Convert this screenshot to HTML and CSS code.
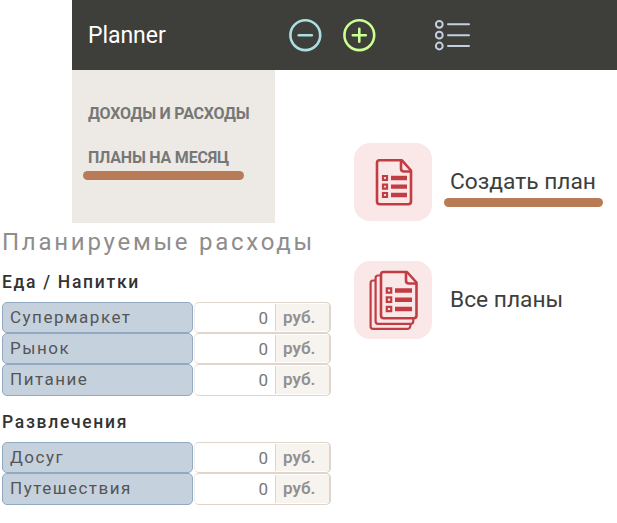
FILE: index.html
```html
<!DOCTYPE html>
<html lang="ru">
<head>
<meta charset="utf-8">
<title>Planner</title>
<link rel="stylesheet" href="styles.css">
</head>
<body>
<header class="topbar">
  <span class="brand">Planner</span>
  <svg class="icon-circle minus" viewBox="0 0 34 34"><circle cx="17.3" cy="17.2" r="14.9"/><path d="M10.8 17.2h13"/></svg>
  <svg class="icon-circle plus" viewBox="0 0 34 34"><circle cx="17.3" cy="17.2" r="14.9"/><path d="M10.8 17.2h13M17.3 10.7v13"/></svg>
  <svg class="icon-list" viewBox="0 0 36 34"><circle cx="4.3" cy="6.3" r="3.4"/><circle cx="4.3" cy="17.2" r="3.4"/><circle cx="4.3" cy="28" r="3.4"/><path d="M13 6.3h21M13 17.2h21M13 28h21"/></svg>
</header>
<div class="content">
  <div class="left">
    <nav class="sidebar">
      <a class="nav-item">ДОХОДЫ И РАСХОДЫ</a>
      <a class="nav-item">ПЛАНЫ НА МЕСЯЦ</a>
      <span class="mark"></span>
    </nav>
    <main class="budget">
      <h1>Планируемые расходы</h1>
      <h2>Еда / Напитки</h2>
      <div class="rows">
        <div class="row"><span class="name">Супермаркет</span><span class="field"><span class="value">0</span><span class="unit">руб.</span></span></div>
        <div class="row"><span class="name">Рынок</span><span class="field"><span class="value">0</span><span class="unit">руб.</span></span></div>
        <div class="row"><span class="name">Питание</span><span class="field"><span class="value">0</span><span class="unit">руб.</span></span></div>
      </div>
      <h2 class="second">Развлечения</h2>
      <div class="rows">
        <div class="row"><span class="name">Досуг</span><span class="field"><span class="value">0</span><span class="unit">руб.</span></span></div>
        <div class="row"><span class="name">Путешествия</span><span class="field"><span class="value">0</span><span class="unit">руб.</span></span></div>
      </div>
    </main>
  </div>
  <section class="actions">
    <a class="action">
      <span class="tile">
        <svg viewBox="0 0 78 78">
          <path class="sheet" d="M25.5 17.3H48L57 27.5V58.5Q57 61.2 54.3 61.2H25.7Q23 61.2 23 58.5V20Q23 17.3 25.5 17.3Z"/>
          <path class="fold" d="M47 18V25.5Q47 28.5 50 28.5H57"/>
          <path class="boxes" d="M29 33h4v4h-4zM29 41.6h4v4h-4zM29 50h4v4h-4z"/>
          <path class="lines" d="M37 35h16M37 43.6h16M37 52h16"/>
        </svg>
      </span>
      <span class="action-text">Создать план<span class="mark"></span></span>
    </a>
    <a class="action">
      <span class="tile">
        <svg viewBox="0 0 78 78">
          <path class="back" d="M22 19.5H19Q16.6 19.5 16.6 22V65.5Q16.6 67.8 19 67.8H54Q56 67.8 56.3 65L56.8 63"/>
          <path class="back" d="M27 14.5H24Q21.6 14.5 21.6 17V60Q21.6 62.8 24 62.8H57Q59.2 62.8 59.3 60V58"/>
          <path class="sheet" d="M29.5 11H53L62.5 21.5V54.5Q62.5 57.2 59.8 57.2H29.7Q27 57.2 27 54.5V13.5Q27 11 29.5 11Z"/>
          <path class="fold" d="M52 12V19.5Q52 22.5 55 22.5H62.5"/>
          <path class="boxes" d="M32.8 27.3h4.4v4.4h-4.4zM32.8 36.4h4.4v4.4h-4.4zM32.8 45.8h4.4v4.4h-4.4z"/>
          <path class="lines" d="M41 29.5h17M41 38.7h17M41 48h17"/>
        </svg>
      </span>
      <span class="action-text">Все планы</span>
    </a>
  </section>
</div>
</body>
</html>
```
FILE: styles.css
```css
* { box-sizing: border-box; }
body {
  margin: 0;
  width: 617px;
  height: 523px;
  overflow: hidden;
  background: #fff;
  font-family: Roboto, "Liberation Sans", sans-serif;
}
.topbar {
  display: flex;
  align-items: center;
  height: 70px;
  margin-left: 72px;
  padding-left: 16px;
  background: #3e3e3a;
  color: #fff;
}
.brand { width: 200px; padding-top: 2px; font-size: 23px; line-height: 28px; letter-spacing: -0.05px; }
.topbar svg { fill: none; stroke-linecap: round; flex: none; }
.icon-circle { width: 34px; height: 34px; stroke-width: 2.6; }
.minus { stroke: #acdfe2; }
.plus { stroke: #cbff92; margin-left: 20px; }
.icon-list { width: 36px; height: 34px; margin-left: 59px; stroke: #c3cfdf; stroke-width: 2; }
.content { display: flex; }
.left { width: 354px; flex: none; }
.sidebar {
  position: relative;
  display: flex;
  flex-direction: column;
  gap: 24px;
  width: 203px;
  height: 153px;
  margin-left: 72px;
  padding: 34px 0 0 16px;
  background: #edeae5;
}
.nav-item { font-size: 16px; line-height: 20px; font-weight: 700; letter-spacing: -0.22px; color: #777; white-space: nowrap; }
.mark { position: absolute; height: 9px; border-radius: 5px; background: #b97b55; }
.sidebar .mark { left: 11px; top: 101px; width: 161px; }
h1 {
  margin: 0;
  padding: 4px 0 0 2px;
  height: 47px;
  font-size: 24px;
  line-height: 30px;
  font-weight: 400;
  letter-spacing: 2.74px;
  color: #8d8d8d;
  white-space: nowrap;
}
h2 {
  margin: 0 0 0 2px;
  height: 32px;
  line-height: 24px;
  font-size: 17.5px;
  font-weight: 500;
  letter-spacing: 1.7px;
  color: #333;
}
.second { margin-top: 14px; }
.rows { display: flex; flex-direction: column; padding-left: 2px; }
.row { display: flex; height: 31px; }
.row:last-child { height: 32px; }
.name {
  width: 191px;
  margin-right: 1px;
  padding-left: 7px;
  border: 1px solid #92a9c3;
  border-radius: 5px;
  background: #c6d1de;
  color: #555;
  font-size: 17px;
  line-height: 29px;
  letter-spacing: 1.5px;
}
.field {
  display: flex;
  width: 137px;
  padding: 1px 0;
  border: 1px solid #dfd5ca;
  border-left-color: #f0ebe5;
  border-right-width: 2px;
  border-radius: 5px;
}
.value { width: 80px; padding-right: 7px; text-align: right; font-size: 17px; line-height: 29px; color: #777; }
.unit { flex: 1; border-left: 1px solid #dfd5ca; padding-left: 7px; background: #f7f4ef; font-size: 17px; line-height: 27px; font-weight: 600; color: #919191; }
.actions { display: flex; flex-direction: column; gap: 40px; padding-top: 73px; }
.action { display: flex; align-items: center; gap: 18px; }
.tile { width: 78px; height: 78px; border-radius: 16px; background: #fae8e9; }
.tile svg { display: block; width: 78px; height: 78px; fill: none; stroke: #c23d43; stroke-width: 2.6; stroke-linejoin: round; }
.tile .back { stroke-width: 2.2; }
.tile .boxes { stroke-width: 2.2; stroke-linejoin: miter; }
.tile .lines { stroke-width: 4.4; }
.action-text { position: relative; font-size: 22.75px; line-height: 30px; color: #3e3e3a; white-space: nowrap; }
.action-text .mark { left: -6px; top: 31px; width: 159px; }
```
